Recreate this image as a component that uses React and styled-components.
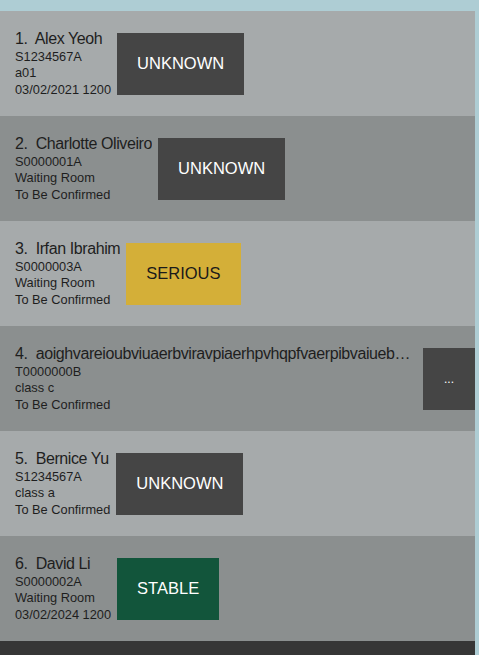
import React from "react";
import styled, { createGlobalStyle, css } from "styled-components";

const GlobalStyle = createGlobalStyle`
  html, body {
    margin: 0;
    padding: 0;
    background: #aecdd4;
  }
  body {
    font-family: "Liberation Sans", Arial, sans-serif;
  }
`;

const Page = styled.div`
  width: 479px;
  height: 655px;
  box-sizing: border-box;
  padding: 11px 4px 0 0;
  background: #aecdd4;
  overflow: hidden;
`;

const List = styled.div`
  display: flex;
  flex-direction: column;
  background: #363636;
  height: 100%;
`;

const Row = styled.div`
  display: flex;
  align-items: center;
  gap: 6px;
  height: 105px;
  flex-shrink: 0;
  box-sizing: border-box;
  padding-left: 15px;
  background: #a6aaab;
  ${({ alt }) =>
    alt &&
    css`
      background: #8b8f8f;
    `}
`;

const Info = styled.div`
  display: flex;
  flex-direction: column;
  min-width: 0;
  flex: 0 1 auto;
  color: #1e1e1e;
`;

const Name = styled.div`
  font-size: 16px;
  line-height: 20px;
  letter-spacing: -0.4px;
  white-space: pre;
  overflow: hidden;
  text-overflow: ellipsis;
`;

const Detail = styled.div`
  font-size: 12.8px;
  line-height: 16.5px;
  white-space: nowrap;
`;

const badgeColors = {
  unknown: { bg: "#454545", fg: "#ffffff" },
  serious: { bg: "#d4af38", fg: "#1a1a1a" },
  stable: { bg: "#12553b", fg: "#ffffff" },
};

const Badge = styled.div`
  flex-shrink: 0;
  display: flex;
  align-items: center;
  justify-content: center;
  height: 62px;
  box-sizing: border-box;
  padding: 0 20px;
  font-size: 16.5px;
  background: ${({ kind }) => badgeColors[kind].bg};
  color: ${({ kind }) => badgeColors[kind].fg};
  ${({ clipped }) =>
    clipped &&
    css`
      width: 52px;
      padding: 0;
      font-size: 12px;
    `}
`;

const patients = [
  { name: "Alex Yeoh", id: "S1234567A", loc: "a01", time: "03/02/2021 1200", status: "UNKNOWN", kind: "unknown" },
  { name: "Charlotte Oliveiro", id: "S0000001A", loc: "Waiting Room", time: "To Be Confirmed", status: "UNKNOWN", kind: "unknown" },
  { name: "Irfan Ibrahim", id: "S0000003A", loc: "Waiting Room", time: "To Be Confirmed", status: "SERIOUS", kind: "serious" },
  {
    name: "aoighvareioubviuaerbviravpiaerhpvhqpfvaerpibvaiuebvoiaerbvoiaer",
    id: "T0000000B",
    loc: "class c",
    time: "To Be Confirmed",
    status: "...",
    kind: "unknown",
    clipped: true,
  },
  { name: "Bernice Yu", id: "S1234567A", loc: "class a", time: "To Be Confirmed", status: "UNKNOWN", kind: "unknown" },
  { name: "David Li", id: "S0000002A", loc: "Waiting Room", time: "03/02/2024 1200", status: "STABLE", kind: "stable" },
];

const App = () => {
  return (
    <>
      <GlobalStyle />
      <Page>
        <List>
          {patients.map((p, i) => (
            <Row key={i} alt={i % 2 === 1}>
              <Info>
                <Name>{`${i + 1}.  ${p.name}`}</Name>
                <Detail>{p.id}</Detail>
                <Detail>{p.loc}</Detail>
                <Detail>{p.time}</Detail>
              </Info>
              <Badge kind={p.kind} clipped={p.clipped}>
                {p.status}
              </Badge>
            </Row>
          ))}
        </List>
      </Page>
    </>
  );
};

export default App;
